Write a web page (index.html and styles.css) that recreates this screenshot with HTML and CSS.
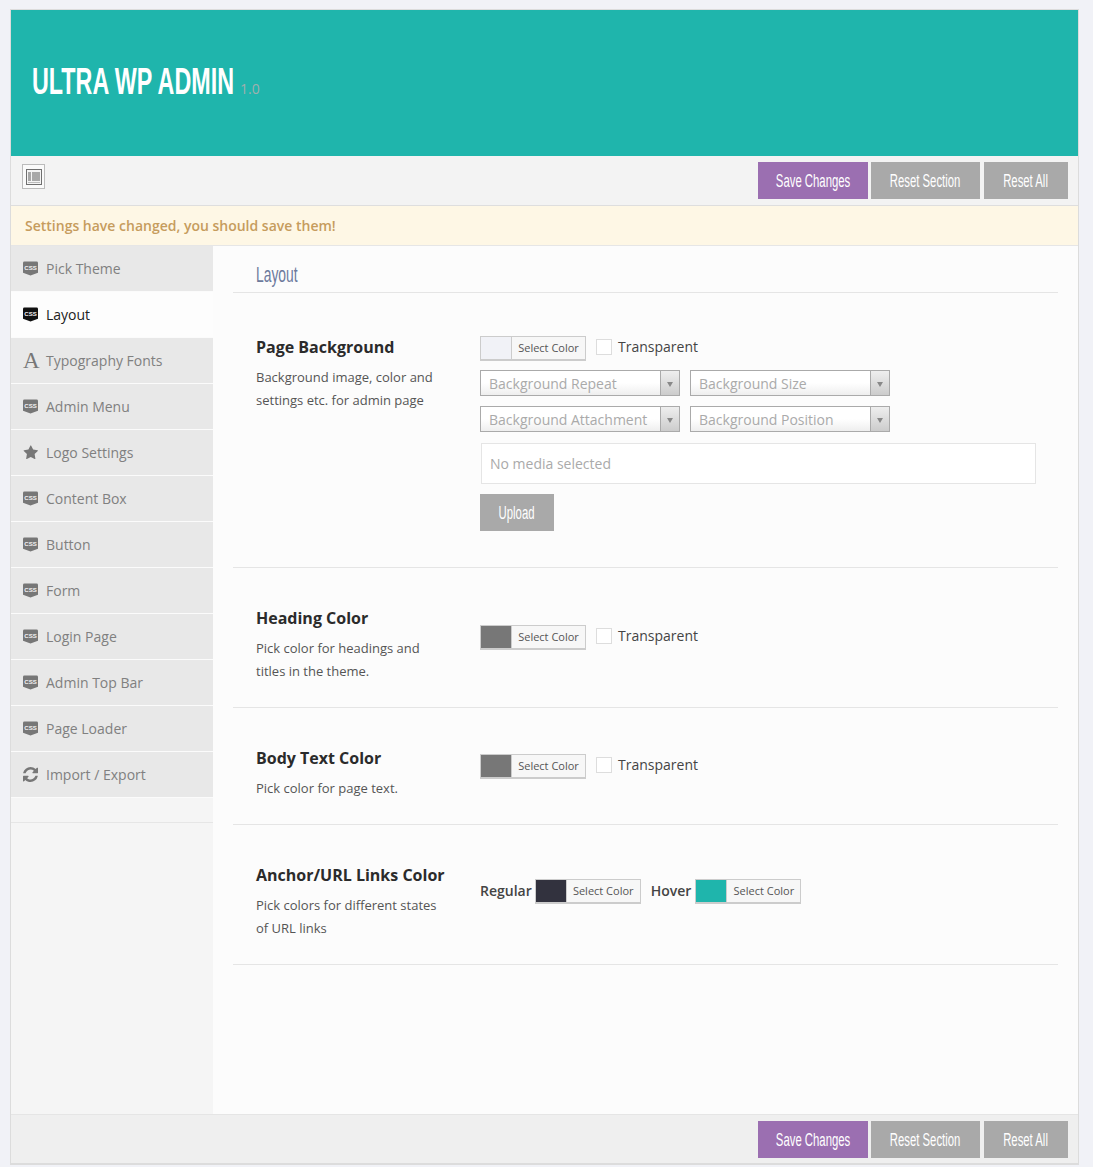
FILE: index.html
```html
<!DOCTYPE html>
<html lang="en">
<head>
<meta charset="utf-8">
<title>Ultra WP Admin</title>
<link rel="stylesheet" href="styles.css">
</head>
<body>
<div class="panel">
  <header class="brand">
    <h1 class="brand-title"><span class="narrow">ULTRA WP ADMIN</span></h1>
    <span class="brand-version">1.0</span>
  </header>
  <div class="toolbar">
    <button class="expand" type="button" aria-label="Expand">
      <svg viewBox="0 0 16 16" width="16" height="16"><rect x=".5" y=".5" width="15" height="15" fill="#f4f4f4" stroke="#6f6f6f"/><rect x="2" y="3" width="3" height="9" fill="#a8a8a8"/><rect x="6" y="3" width="8" height="9" fill="#a8a8a8"/><rect x="2" y="13" width="12" height="1" fill="#bbb"/></svg>
    </button>
    <div class="actions">
      <a class="btn btn-save"><span class="narrow">Save Changes</span></a>
      <a class="btn btn-section"><span class="narrow">Reset Section</span></a>
      <a class="btn btn-all"><span class="narrow">Reset All</span></a>
    </div>
  </div>
  <div class="notice">Settings have changed, you should save them!</div>
  <div class="body">
    <nav class="side">
      <a class="side-item"><svg class="ico" viewBox="0 0 16 15"><path d="M1.500 0h13A1.500 1.500 0 0 1 16 1.500V12l-8 3-8-3V1.500A1.500 1.500 0 0 1 1.500 0z" fill="currentColor"/><text x="8" y="8.800" text-anchor="middle" class="ico-css">CSS</text></svg>Pick Theme</a>
      <a class="side-item is-active"><svg class="ico" viewBox="0 0 16 15"><path d="M1.500 0h13A1.500 1.500 0 0 1 16 1.500V12l-8 3-8-3V1.500A1.500 1.500 0 0 1 1.500 0z" fill="currentColor"/><text x="8" y="8.800" text-anchor="middle" class="ico-css">CSS</text></svg>Layout</a>
      <a class="side-item"><span class="ico ico-a">A</span>Typography Fonts</a>
      <a class="side-item"><svg class="ico" viewBox="0 0 16 15"><path d="M1.500 0h13A1.500 1.500 0 0 1 16 1.500V12l-8 3-8-3V1.500A1.500 1.500 0 0 1 1.500 0z" fill="currentColor"/><text x="8" y="8.800" text-anchor="middle" class="ico-css">CSS</text></svg>Admin Menu</a>
      <a class="side-item"><svg class="ico" viewBox="0 64 1728 1600"><path fill="currentColor" d="M1728 647q0 22-26 48l-363 354 86 500q1 7 1 20 0 21-10.500 35.500t-30.500 14.500q-19 0-40-12l-449-236-449 236q-22 12-40 12-21 0-31.500-14.500t-10.500-35.500q0-6 2-20l86-500-364-354q-25-27-25-48 0-37 56-46l502-73 225-455q19-41 49-41t49 41l225 455 502 73q56 9 56 46z"/></svg>Logo Settings</a>
      <a class="side-item"><svg class="ico" viewBox="0 0 16 15"><path d="M1.500 0h13A1.500 1.500 0 0 1 16 1.500V12l-8 3-8-3V1.500A1.500 1.500 0 0 1 1.500 0z" fill="currentColor"/><text x="8" y="8.800" text-anchor="middle" class="ico-css">CSS</text></svg>Content Box</a>
      <a class="side-item"><svg class="ico" viewBox="0 0 16 15"><path d="M1.500 0h13A1.500 1.500 0 0 1 16 1.500V12l-8 3-8-3V1.500A1.500 1.500 0 0 1 1.500 0z" fill="currentColor"/><text x="8" y="8.800" text-anchor="middle" class="ico-css">CSS</text></svg>Button</a>
      <a class="side-item"><svg class="ico" viewBox="0 0 16 15"><path d="M1.500 0h13A1.500 1.500 0 0 1 16 1.500V12l-8 3-8-3V1.500A1.500 1.500 0 0 1 1.500 0z" fill="currentColor"/><text x="8" y="8.800" text-anchor="middle" class="ico-css">CSS</text></svg>Form</a>
      <a class="side-item"><svg class="ico" viewBox="0 0 16 15"><path d="M1.500 0h13A1.500 1.500 0 0 1 16 1.500V12l-8 3-8-3V1.500A1.500 1.500 0 0 1 1.500 0z" fill="currentColor"/><text x="8" y="8.800" text-anchor="middle" class="ico-css">CSS</text></svg>Login Page</a>
      <a class="side-item"><svg class="ico" viewBox="0 0 16 15"><path d="M1.500 0h13A1.500 1.500 0 0 1 16 1.500V12l-8 3-8-3V1.500A1.500 1.500 0 0 1 1.500 0z" fill="currentColor"/><text x="8" y="8.800" text-anchor="middle" class="ico-css">CSS</text></svg>Admin Top Bar</a>
      <a class="side-item"><svg class="ico" viewBox="0 0 16 15"><path d="M1.500 0h13A1.500 1.500 0 0 1 16 1.500V12l-8 3-8-3V1.500A1.500 1.500 0 0 1 1.500 0z" fill="currentColor"/><text x="8" y="8.800" text-anchor="middle" class="ico-css">CSS</text></svg>Page Loader</a>
      <a class="side-item"><svg class="ico" viewBox="128 128 1536 1536"><path fill="currentColor" d="M1639 1056q0 5-1 7-64 268-268 434.500t-478 166.500q-146 0-282.500-55t-243.500-157l-129 129q-19 19-45 19t-45-19-19-45v-448q0-26 19-45t45-19h448q26 0 45 19t19 45-19 45l-137 137q71 66 161 102t187 36q134 0 250-65t186-179q11-17 53-117 8-23 30-23h192q13 0 22.500 9.500t9.500 22.500zm25-800v448q0 26-19 45t-45 19h-448q-26 0-45-19t-19-45 19-45l138-138q-148-137-349-137-134 0-250 65t-186 179q-11 17-53 117-8 23-30 23h-199q-13 0-22.500-9.500t-9.500-22.500v-7q65-268 270-434.500t480-166.500q146 0 284 55.500t245 156.500l130-129q19-19 45-19t45 19 19 45z"/></svg>Import / Export</a>
      <div class="side-end"></div>
    </nav>
    <main class="content">
      <h2 class="page-title"><span class="narrow">Layout</span></h2>

      <section class="row row-bg">
        <div class="row-info">
          <h3>Page Background</h3>
          <p>Background image, color and settings etc. for admin page</p>
        </div>
        <div class="row-fields">
          <div class="inline">
            <span class="picker"><i class="swatch swatch-page"></i><span class="picker-label">Select Color</span></span>
            <span class="check"></span><span class="check-label">Transparent</span>
          </div>
          <div class="selects">
            <span class="select">Background Repeat</span>
            <span class="select">Background Size</span>
            <span class="select">Background Attachment</span>
            <span class="select">Background Position</span>
          </div>
          <div class="media">No media selected</div>
          <a class="btn btn-upload"><span class="narrow">Upload</span></a>
        </div>
      </section>

      <section class="row row-heading">
        <div class="row-info">
          <h3>Heading Color</h3>
          <p>Pick color for headings and titles in the theme.</p>
        </div>
        <div class="row-fields">
          <div class="inline">
            <span class="picker"><i class="swatch swatch-grey"></i><span class="picker-label">Select Color</span></span>
            <span class="check"></span><span class="check-label">Transparent</span>
          </div>
        </div>
      </section>

      <section class="row row-text">
        <div class="row-info">
          <h3>Body Text Color</h3>
          <p>Pick color for page text.</p>
        </div>
        <div class="row-fields">
          <div class="inline">
            <span class="picker"><i class="swatch swatch-grey"></i><span class="picker-label">Select Color</span></span>
            <span class="check"></span><span class="check-label">Transparent</span>
          </div>
        </div>
      </section>

      <section class="row row-links">
        <div class="row-info">
          <h3>Anchor/URL Links Color</h3>
          <p>Pick colors for different states of URL links</p>
        </div>
        <div class="row-fields">
          <div class="inline">
            <span class="link-label">Regular</span>
            <span class="picker"><i class="swatch swatch-dark"></i><span class="picker-label">Select Color</span></span>
            <span class="link-label link-hover">Hover</span>
            <span class="picker"><i class="swatch swatch-teal"></i><span class="picker-label">Select Color</span></span>
          </div>
        </div>
      </section>
    </main>
  </div>
  <footer class="footer">
    <div class="actions">
      <a class="btn btn-save"><span class="narrow">Save Changes</span></a>
      <a class="btn btn-section"><span class="narrow">Reset Section</span></a>
      <a class="btn btn-all"><span class="narrow">Reset All</span></a>
    </div>
  </footer>
</div>
</body>
</html>
```
FILE: styles.css
```css
* { box-sizing: border-box; }
html, body { margin: 0; padding: 0; }
body {
  background: #f1f2f7;
  font-family: "Open Sans", sans-serif;
  font-size: 14px;
  color: #444;
  padding: 9px 14px 0 10px;
  height: 1167px;
  overflow: hidden;
}
.narrow { font-family: "Liberation Sans", sans-serif; display: inline-block; white-space: nowrap; transform: scaleX(.63); flex: none; }
.panel { border: 1px solid #dcdcdc; border-bottom-width: 2px; background: #fcfcfc; }

.brand { height: 146px; background: #1fb5ac; display: flex; align-items: baseline; padding: 48px 0 0 21px; }
.brand-title { margin: 0; width: 202px; font-size: 37px; line-height: 44px; font-weight: 400; color: #fff; }
.brand-title .narrow { font-weight: 700; transform: scaleX(.63); transform-origin: left center; }
.brand-version { margin-left: 6px; font-size: 14px; color: #9fb0ae; }

.toolbar { height: 50px; background: #f3f3f3; border-bottom: 1px solid #dedede; display: flex; justify-content: space-between; padding: 6px 10px 0 11px; }
.expand { width: 23px; height: 25px; margin-top: 2px; padding: 0; border: 1px solid #bbb; background: #fafafa; display: flex; align-items: center; justify-content: center; }
.actions { display: flex; }
.btn { display: flex; align-items: center; justify-content: center; height: 37px; padding-top: 2px; color: #fff; background: #a9a9a9; font-size: 18px; }
.btn-save { width: 110px; background: #9b6fb1; }
.btn-section { width: 109px; margin-left: 3px; }
.btn-all { width: 84px; margin-left: 4px; }

.notice { height: 40px; background: #fef7e5; border-bottom: 1px solid #e6e6e6; padding-left: 14px; font-size: 14px; line-height: 39px; font-weight: 600; color: #c69c5d; }

.body { display: flex; height: 868px; }
.side { width: 202px; flex: none; background: #f5f5f5; display: flex; flex-direction: column; }
.side-item { height: 46px; flex: none; display: flex; align-items: center; padding-left: 12px; background: #e8e8e8; border-bottom: 1px solid #fbfbfb; color: #808080; font-size: 14px; }
.side-item.is-active { background: #fdfdfd; color: #222; }
.ico { width: 15px; height: 15px; margin-right: 8px; flex: none; color: #777; display: block; }
.is-active .ico { color: #111; }
.ico-css { font-family: "Liberation Sans", sans-serif; font-size: 6.500px; font-weight: 700; fill: #f4f4f4; }
.ico-a { font-family: "Liberation Serif", serif; font-size: 23px; line-height: 15px; text-align: center; }
.side-end { height: 25px; border-bottom: 1px solid #e6e6e6; }

.content { flex: 1; padding: 0 20px; background: #fcfcfc; }
.page-title { margin: 0; height: 47px; border-bottom: 1px solid #e5e5e5; padding: 13px 0 0 23px; font-size: 22px; line-height: 28px; font-weight: 400; color: #6d7a9c; }
.page-title .narrow { transform-origin: left center; }

.row { display: flex; border-bottom: 1px solid #e5e5e5; }
.row-info { width: 247px; flex: none; padding: 36px 0 0 23px; }
.row-info h3 { margin: 0; font-size: 16px; line-height: 28px; font-weight: 700; color: #2b2b2b; white-space: nowrap; }
.row-info p { margin: 5px 0 0; width: 190px; font-size: 13px; line-height: 23px; color: #555; }
.row-fields { flex: 1; }
.row-bg { height: 275px; }
.row-bg .row-info { padding-top: 40px; }
.row-bg .row-fields { padding-top: 43px; }
.row-heading { height: 140px; }
.row-heading .row-fields { padding-top: 57px; }
.row-text { height: 117px; }
.row-text .row-fields { padding-top: 46px; }
.row-links { height: 140px; }
.row-links .row-fields { padding-top: 54px; }

.inline { display: flex; align-items: center; height: 24px; }
.picker { display: flex; width: 106px; height: 24px; border: 1px solid #ccc; box-shadow: 0 1px 0 #ccc; background: #f7f7f7; flex: none; }
.swatch { width: 30px; flex: none; display: block; }
.swatch-page { background: #f1f2f7; }
.swatch-grey { background: #777; }
.swatch-dark { background: #32323e; }
.swatch-teal { background: #1fb5ac; }
.picker-label { flex: 1; border-left: 1px solid #ccc; font-size: 11px; line-height: 22px; text-align: center; color: #555; }
.check { width: 16px; height: 16px; margin-left: 10px; border: 1px solid #ddd; background: #fff; flex: none; margin-top: -2px; }
.check-label { margin-left: 6px; font-size: 14px; color: #444; margin-top: -4px; }

.selects { display: grid; grid-template-columns: 200px 200px; gap: 10px; margin-top: 10px; }
.select { position: relative; height: 26px; border: 1px solid #aaa; background: linear-gradient(#fff 50%, #eee); padding-left: 8px; font-size: 14px; line-height: 25px; color: #aaa; }
.select::before { content: ""; position: absolute; top: 0; right: 0; bottom: 0; width: 18px; border-left: 1px solid #aaa; background: linear-gradient(#eee, #ccc); }
.select::after { content: ""; position: absolute; top: 11px; right: 6px; border: 3.500px solid transparent; border-top: 5px solid #888; border-bottom: 0; }
.media { height: 41px; margin: 11px 22px 0 1px; border: 1px solid #e5e5e5; background: #fff; padding-left: 8px; font-size: 14px; line-height: 39px; color: #aaa; }
.btn-upload { width: 74px; margin-top: 10px; }

.link-label { font-size: 14px; font-weight: 600; color: #444; margin-right: 3px; margin-top: -1px; }
.link-hover { margin-left: 10px; margin-right: 4px; }

.footer { height: 49px; background: #efefef; border-top: 1px solid #e5e5e5; display: flex; justify-content: flex-end; padding: 6px 10px 0 0; }
```
